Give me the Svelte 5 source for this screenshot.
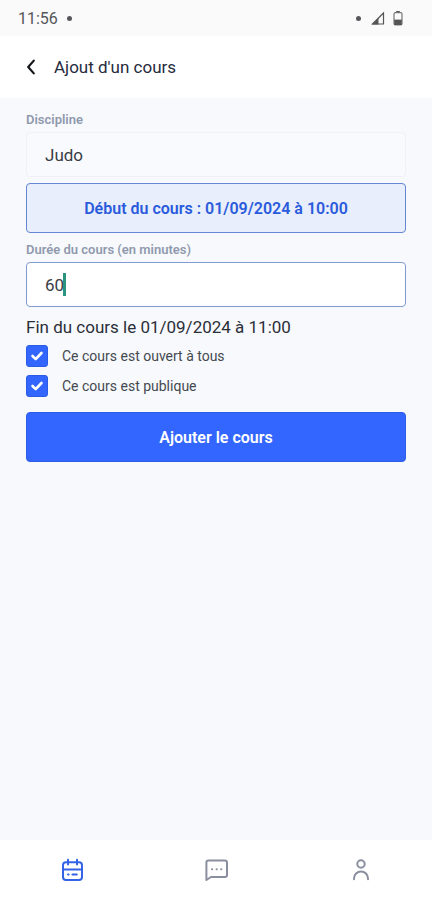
<script lang="ts">
    type Tab = "calendar" | "messages" | "profile";

    let discipline = $state("Judo");
    let start = $state(new Date(2024, 8, 1, 10, 0));
    let duration = $state("60");
    let openToAll = $state(true);
    let isPublic = $state(true);
    let tab = $state<Tab>("calendar");
    let end = $derived(new Date(start.getTime() + (Number(duration) || 0) * 60000));

    const pad = (value: number) => String(value).padStart(2, "0");

    const format = (date: Date) => {
        const day = `${pad(date.getDate())}/${pad(date.getMonth() + 1)}/${date.getFullYear()}`;
        return `${day} à ${pad(date.getHours())}:${pad(date.getMinutes())}`;
    };

    const nextDay = () => {
        start = new Date(start.getTime() + 24 * 3600000);
    };
</script>

<div class="screen">
    <div class="status">
        <span>11:56</span>
        <i class="dot"></i>
        <div class="status-icons">
            <i class="dot"></i>
            <svg width="14" height="14" viewBox="0 0 14 14">
                <path d="M1.5 13H12.5V2Z" fill="none" stroke="#555" stroke-width="1.2" />
                <path d="M1 13.4 7.5 7V13.4Z" fill="#555" />
            </svg>
            <svg width="10" height="16" viewBox="0 0 10 16">
                <path d="M3.2 1H6.8V3H3.2Z" fill="#555" />
                <rect x="1" y="2.6" width="8" height="12.2" rx="1.4" fill="none" stroke="#777" stroke-width="1.2" />
                <path d="M1.2 9.6H8.8V15H1.2Z" fill="#555" />
            </svg>
        </div>
    </div>

    <header>
        <button class="back" type="button" aria-label="Retour">
            <svg width="10" height="18" viewBox="0 0 10 18">
                <path d="M7.8 2.6 2.2 9 7.8 15.4" fill="none" stroke="#15171c" stroke-width="2.2" stroke-linecap="round" stroke-linejoin="round" />
            </svg>
        </button>
        <h1>Ajout d'un cours</h1>
    </header>

    <main>
        <label class="caption" for="discipline">Discipline</label>
        <input class="field" id="discipline" readonly value={discipline} />

        <button class="date" type="button" onclick={nextDay}>Début du cours : {format(start)}</button>

        <label class="caption" for="duration">Durée du cours (en minutes)</label>
        <div class="active-field">
            <input class="field" id="duration" inputmode="numeric" bind:value={duration} />
            <span class="caret" style:left="calc(18px + {duration.length}ch)"></span>
        </div>

        <p>Fin du cours le {format(end)}</p>

        <label class="check">
            <input type="checkbox" bind:checked={openToAll} />
            <svg width="22" height="22" viewBox="0 0 22 22">
                <path d="M6.5 11 9.7 14.2 15.5 8" />
            </svg>
            <span>Ce cours est ouvert à tous</span>
        </label>
        <label class="check">
            <input type="checkbox" bind:checked={isPublic} />
            <svg width="22" height="22" viewBox="0 0 22 22">
                <path d="M6.5 11 9.7 14.2 15.5 8" />
            </svg>
            <span>Ce cours est publique</span>
        </label>

        <button class="submit" type="button">Ajouter le cours</button>
    </main>

    <nav>
        <button type="button" aria-label="Calendrier" class:active={tab === "calendar"} onclick={() => (tab = "calendar")}>
            <svg width="24" height="24" viewBox="0 0 24 24">
                <rect x="3" y="4.2" width="19" height="17.8" rx="3" />
                <path d="M3 11.4H22M8 1.8V6.4M17 1.8V6.4" />
                <path d="M8 16.4H8.6M12.4 16.4H16.8" />
            </svg>
        </button>
        <button type="button" aria-label="Messages" class:active={tab === "messages"} onclick={() => (tab = "messages")}>
            <svg width="24" height="24" viewBox="0 0 24 24">
                <path d="M2.4 22V4.6Q2.4 2.6 4.4 2.6H21Q23 2.6 23 4.6V17Q23 19 21 19H7Z" />
                <path d="M8 11.2H8.2M12.6 11.2H12.8M17.2 11.2H17.4" />
            </svg>
        </button>
        <button type="button" aria-label="Profil" class:active={tab === "profile"} onclick={() => (tab = "profile")}>
            <svg width="24" height="24" viewBox="0 0 24 24">
                <circle cx="13" cy="6" r="3.7" />
                <path d="M6 21.2V20.4A7 7 0 0 1 20 20.4V21.2" />
            </svg>
        </button>
    </nav>
</div>

<style>
    :global(body) {
        margin: 0;
    }

    .screen {
        min-height: 100vh;
        display: flex;
        flex-direction: column;
        font-family: Roboto, "Liberation Sans", sans-serif;
        font-size: 16px;
        color: #2b2f38;
        background-color: #f7f9fd;
    }

    button {
        font: inherit;
        cursor: pointer;
    }

    .status {
        height: 36px;
        display: flex;
        align-items: center;
        gap: 9px;
        padding: 0 29px 0 18px;
        box-sizing: border-box;
        color: #55575a;
        background-color: #fafafa;
    }

    .status-icons {
        display: flex;
        align-items: center;
        gap: 10px;
        margin-left: auto;
    }

    .status-icons svg:last-child {
        margin-left: -2px;
    }

    .dot {
        width: 5px;
        height: 5px;
        border-radius: 50%;
        background-color: #55575a;
    }

    header {
        height: 62px;
        display: flex;
        align-items: center;
        gap: 18px;
        padding: 0 26px;
        box-sizing: border-box;
        background-color: #fff;
    }

    .back {
        display: flex;
        border: 0;
        padding: 0;
        background: none;
    }

    h1 {
        margin: 0;
        font-size: 17px;
        font-weight: 400;
        color: #262b3d;
    }

    main {
        flex-grow: 1;
        display: flex;
        flex-direction: column;
        padding: 14px 26px;
    }

    .caption {
        margin-bottom: 4px;
        font-size: 13px;
        font-weight: 600;
        line-height: 16px;
        color: #9199ae;
    }

    .field {
        width: 100%;
        height: 45px;
        box-sizing: border-box;
        border: 1px solid #eff1f6;
        border-radius: 4px;
        outline: 0;
        padding: 0 18px;
        font: inherit;
        color: #3a3d44;
        background-color: #f8fafd;
    }

    .active-field {
        position: relative;
    }

    .field,
    .active-field,
    p {
        font-size: 17px;
    }

    .active-field .field {
        display: block;
        border-color: #7f9bd0;
        caret-color: transparent;
        background-color: #fff;
    }

    .caret {
        position: absolute;
        top: 11px;
        width: 3px;
        height: 23px;
        background-color: #2a9480;
    }

    .date,
    .submit {
        height: 50px;
        border: 1px solid #3366ff;
        border-radius: 4px;
        font-weight: 600;
    }

    .date {
        margin: 6px 0 9px;
        border-color: #6486d3;
        color: #2a5bdc;
        background-color: #e8eefb;
    }

    p {
        margin: 10px 0 8px;
        line-height: 20px;
    }

    .check {
        position: relative;
        display: flex;
        align-items: center;
        gap: 14px;
        margin-bottom: 8px;
        font-size: 14px;
        line-height: 22px;
        color: #454950;
    }

    .check input {
        appearance: none;
        width: 22px;
        height: 22px;
        margin: 0;
        border: 1px solid #2b5ce6;
        border-radius: 3px;
        background-color: #fff;
    }

    .check input:checked {
        background-color: #3366ff;
    }

    .check svg {
        position: absolute;
        left: 0;
        top: 0;
        fill: none;
        stroke: #fff;
        stroke-width: 2.6;
        stroke-linecap: round;
        stroke-linejoin: round;
        pointer-events: none;
    }

    .submit {
        margin-top: 7px;
        border-color: #2b5ce6;
        color: #fff;
        background-color: #3366ff;
    }

    nav {
        height: 60px;
        display: grid;
        grid-template-columns: repeat(3, 1fr);
        background-color: #fff;
    }

    nav button {
        display: flex;
        align-items: center;
        justify-content: center;
        border: 0;
        padding: 0;
        color: #8a8f9f;
        background: none;
    }

    nav svg {
        fill: none;
        stroke: currentColor;
        stroke-width: 2;
        stroke-linecap: round;
        stroke-linejoin: round;
    }

    nav .active {
        color: #3563e6;
    }
</style>
